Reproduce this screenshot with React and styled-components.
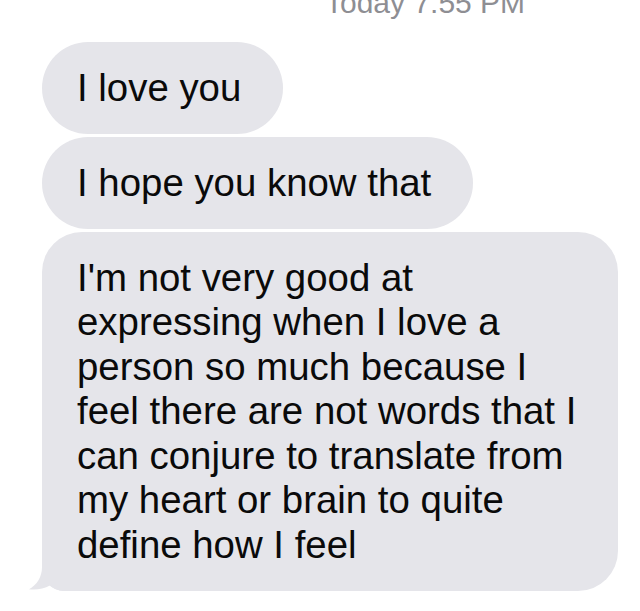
import React from "react";
import styled, { createGlobalStyle } from "styled-components";

const Global = createGlobalStyle`
  html, body {
    margin: 0;
    padding: 0;
    background: #ffffff;
  }
  body {
    font-family: "Liberation Sans", Arial, Helvetica, sans-serif;
    overflow: hidden;
  }
`;

const Screen = styled.div`
  width: 640px;
  height: 611px;
  background: #ffffff;
  overflow: hidden;
  display: flex;
  flex-direction: column;
`;

const Timestamp = styled.div`
  margin-top: -12px;
  padding-left: 325px;
  font-size: 30px;
  line-height: 30px;
  color: #8e8e93;
  white-space: nowrap;
`;

const Thread = styled.div`
  display: flex;
  flex-direction: column;
  align-items: flex-start;
  gap: 3.5px;
  padding: 24px 0 0 42px;
`;

const Bubble = styled.div`
  position: relative;
  box-sizing: border-box;
  width: ${(p) => (p.$width ? `${p.$width}px` : "auto")};
  padding: 23.5px 42px 23.5px 35px;
  background: #e5e5ea;
  color: #0a0a0a;
  font-size: 38.4px;
  line-height: 44.5px;
  border-radius: ${(p) => (p.$tail ? "40px 40px 40px 22px" : "46px")};
`;

const Line = styled.span`
  display: block;
  white-space: nowrap;
`;

const Tail = styled.svg`
  position: absolute;
  left: -14px;
  bottom: 0;
  width: 36px;
  height: 30px;
  display: block;
`;

const messages = [
  { lines: ["I love you"] },
  { lines: ["I hope you know that"] },
  {
    width: 576,
    tail: true,
    lines: [
      "I'm not very good at",
      "expressing when I love a",
      "person so much because I",
      "feel there are not words that I",
      "can conjure to translate from",
      "my heart or brain to quite",
      "define how I feel",
    ],
  },
];

export default function App() {
  return (
    <Screen>
      <Global />
      <Timestamp>Today 7:55 PM</Timestamp>
      <Thread>
        {messages.map((m, i) => (
          <Bubble key={i} $width={m.width} $tail={m.tail}>
            {m.lines.map((l, j) => (
              <Line key={j}>{l}</Line>
            ))}
            {m.tail && (
              <Tail viewBox="0 0 36 30" aria-hidden="true">
                <path
                  d="M14 0 L14 6 C14 16 9 24 1 28.2 C8 29.4 16 27.6 22 24.5 C26 27.8 30 29.6 36 30 L36 0 Z"
                  fill="#e5e5ea"
                />
              </Tail>
            )}
          </Bubble>
        ))}
      </Thread>
    </Screen>
  );
}
